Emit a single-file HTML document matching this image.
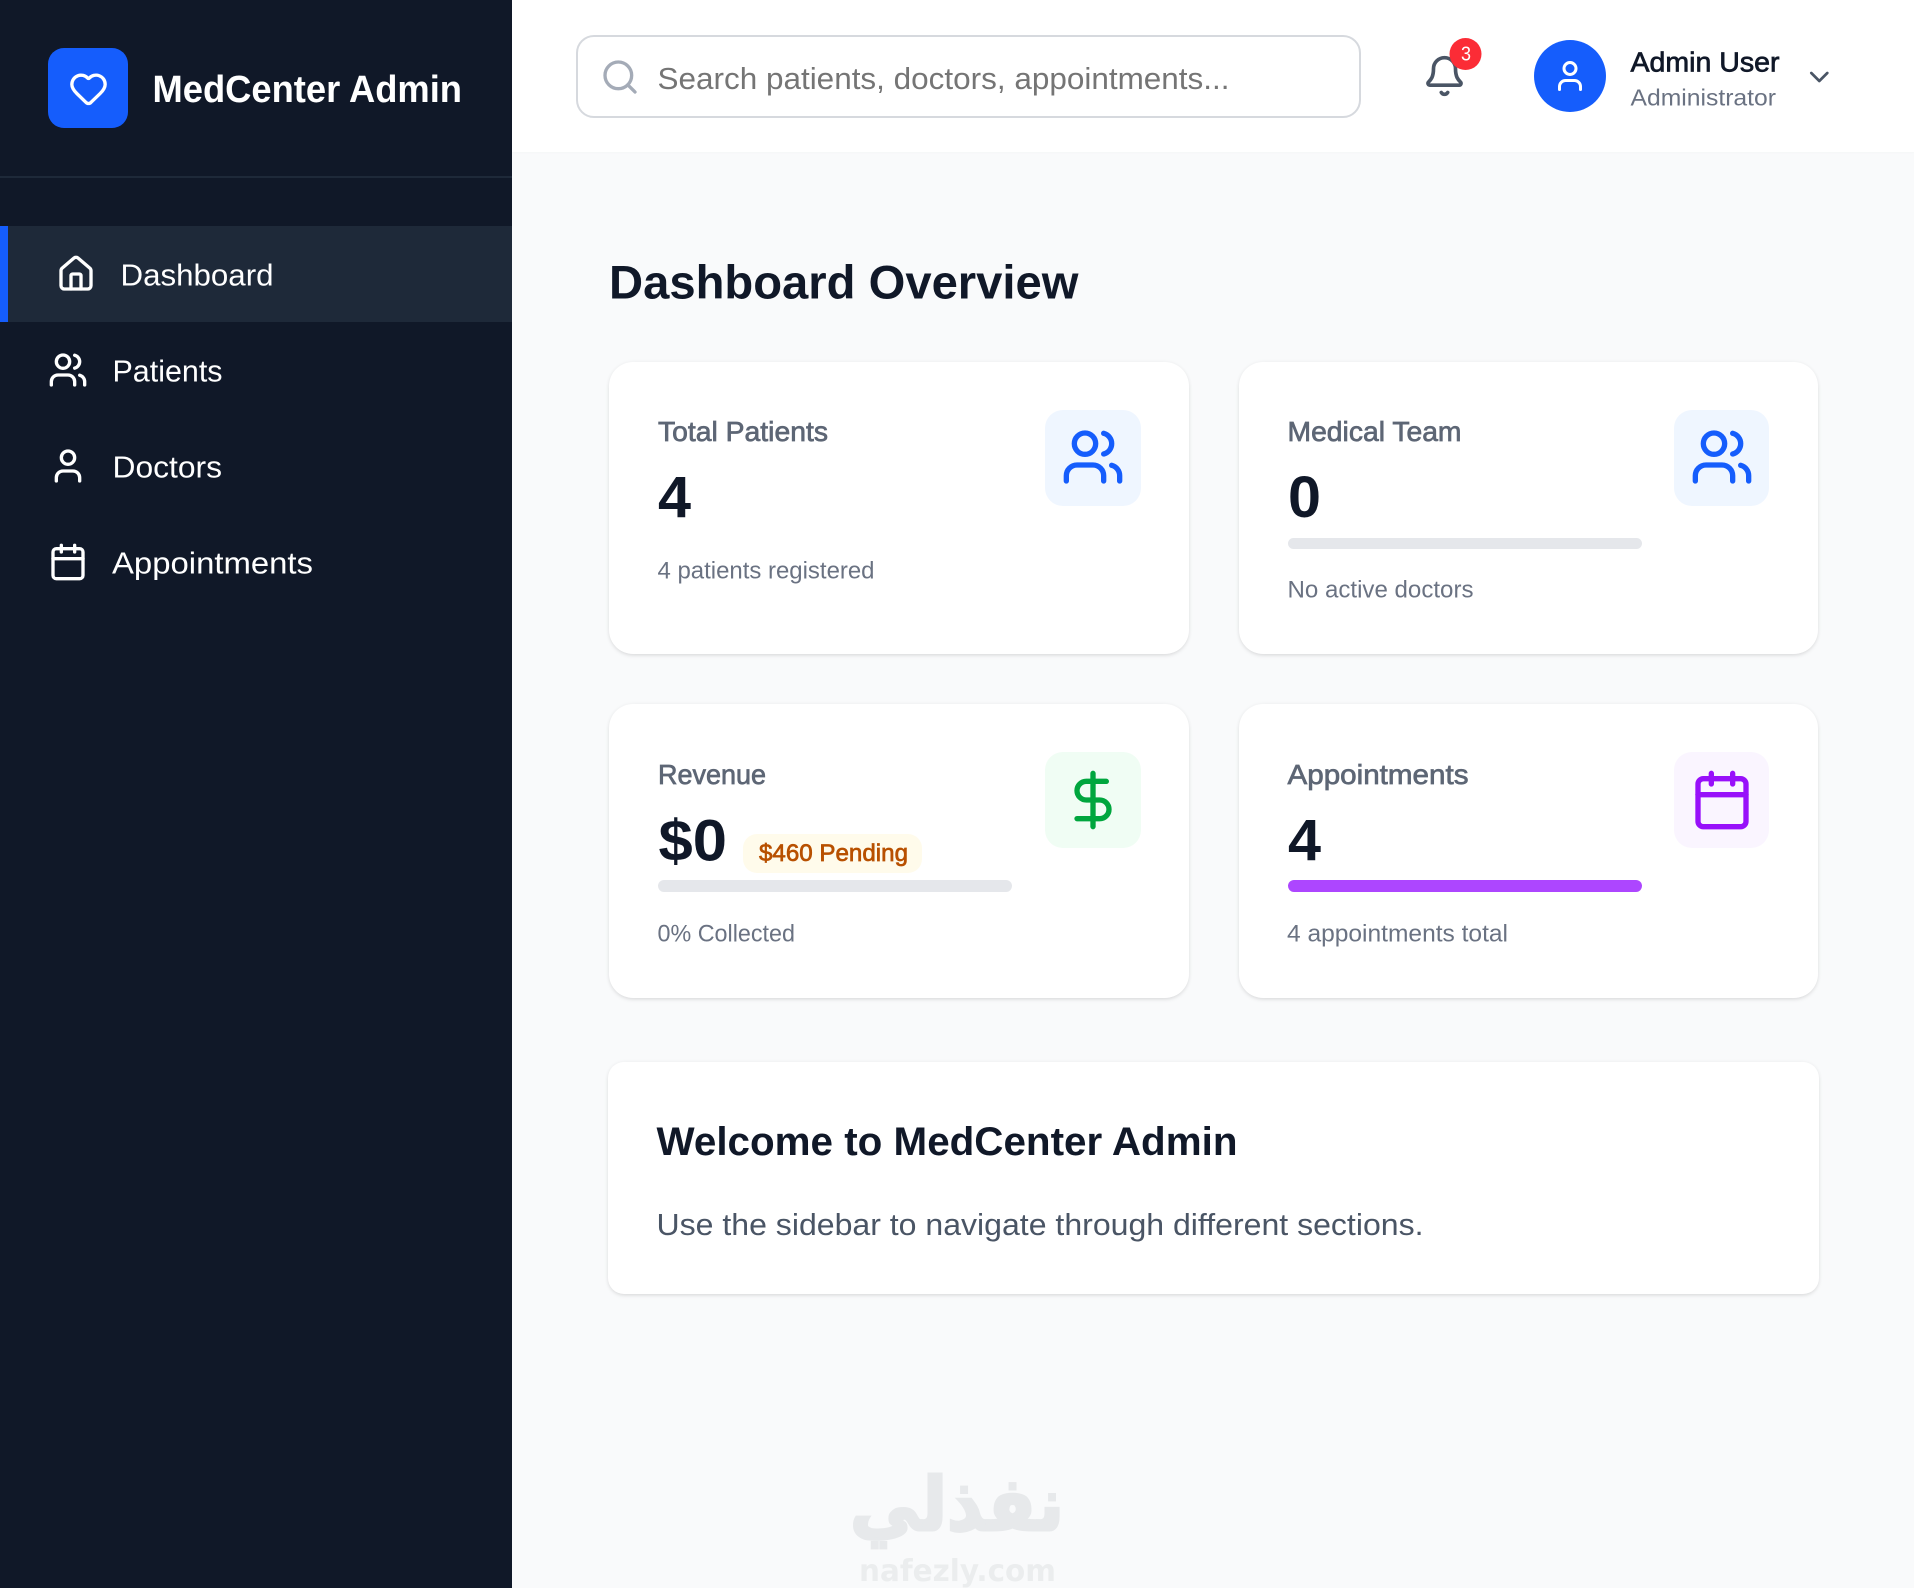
<!DOCTYPE html>
<html lang="en">
<head>
<meta charset="utf-8">
<title>MedCenter Admin</title>
<style>
html,body{margin:0;padding:0;width:1914px;height:1588px;overflow:hidden;background:#f9fafb;font-family:"Liberation Sans",sans-serif}
.abs{position:absolute;box-sizing:border-box}
#side{left:0;top:0;width:512px;height:1588px;background:#101828}
#side .rule{position:absolute;left:0;top:176px;width:512px;height:2px;background:#1e2939}
#side .active{position:absolute;box-sizing:border-box;left:0;top:226px;width:512px;height:96px;background:#1e2939;border-left:8px solid #155dfc}
#side .logo{position:absolute;left:48px;top:48px;width:80px;height:80px;border-radius:16px;background:#155dfc}
#head{left:512px;top:0;width:1402px;height:152px;background:#fff;box-shadow:0 1px 2px rgba(0,0,0,.02)}
#search{left:576px;top:35px;width:785px;height:83px;border:2px solid #d6d9de;border-radius:18px;background:#fff}
#avatar{left:1534px;top:40px;width:72px;height:72px;border-radius:50%;background:#155dfc}
.card{background:#fff;border-radius:24px;box-shadow:0 2px 5px -1px rgba(0,0,0,.13),0 0 4px rgba(0,0,0,.045)}
.tile{border-radius:18px}
.bar{height:12px;border-radius:6px;background:#e5e7eb}
#layer{position:absolute;left:0;top:0;width:1914px;height:1588px}
#layer text{font-family:"Liberation Sans",sans-serif;white-space:pre}
.b{font-weight:700}
.m{stroke-width:.7px;paint-order:stroke}
.ic{fill:none;stroke-linecap:round;stroke-linejoin:round;stroke-width:2}
</style>
</head>
<body>
<aside id="side" class="abs">
  <div class="logo"></div>
  <div class="rule"></div>
  <div class="active"></div>
</aside>
<header id="head" class="abs"></header>
<div id="search" class="abs"></div>
<div id="avatar" class="abs"></div>

<div class="abs card" style="left:608.5px;top:362px;width:580.5px;height:292px"></div>
<div class="abs card" style="left:1239px;top:362px;width:579px;height:292px"></div>
<div class="abs card" style="left:608.5px;top:704px;width:580.5px;height:294px"></div>
<div class="abs card" style="left:1239px;top:704px;width:579px;height:294px"></div>
<div class="abs card" style="left:608px;top:1062px;width:1211px;height:232px;border-radius:16px"></div>

<div class="abs tile" style="left:1045px;top:410px;width:96px;height:96px;background:#eff6ff"></div>
<div class="abs tile" style="left:1674px;top:410px;width:95px;height:96px;background:#eff6ff"></div>
<div class="abs tile" style="left:1045px;top:752px;width:96px;height:96px;background:#f0fdf4"></div>
<div class="abs tile" style="left:1674px;top:752px;width:95px;height:96px;background:#faf5ff"></div>

<div class="abs bar" style="left:1288px;top:538px;width:354px;height:11px"></div>
<div class="abs bar" style="left:658px;top:880px;width:354px"></div>
<div class="abs bar" style="left:1288px;top:880px;width:354px;background:#ad46ff"></div>
<div class="abs" style="left:743px;top:834px;width:179px;height:39px;border-radius:14px;background:#fffbeb"></div>

<svg id="layer" viewBox="0 0 1914 1588" xmlns="http://www.w3.org/2000/svg">
  <!-- logo heart -->
  <svg x="68.5" y="68.5" width="40" height="40" viewBox="0 0 24 24" class="ic" stroke="#fff"><path d="M2 9.5a5.5 5.5 0 0 1 9.591-3.676.56.56 0 0 0 .818 0A5.49 5.49 0 0 1 22 9.5c0 2.29-1.5 4-3 5.5l-5.492 5.313a2 2 0 0 1-3 .019L5 15c-1.5-1.5-3-3.2-3-5.5"/></svg>
  <text x="152.5" y="102" font-size="38" class="b" fill="#fff" textLength="309.5" lengthAdjust="spacingAndGlyphs">MedCenter Admin</text>

  <!-- nav icons -->
  <svg x="56" y="254" width="40" height="40" viewBox="0 0 24 24" class="ic" stroke="#fff"><path d="M15 21v-8a1 1 0 0 0-1-1h-4a1 1 0 0 0-1 1v8"/><path d="M3 10a2 2 0 0 1 .709-1.528l7-5.999a2 2 0 0 1 2.582 0l7 5.999A2 2 0 0 1 21 10v9a2 2 0 0 1-2 2H5a2 2 0 0 1-2-2z"/></svg>
  <svg x="48" y="350" width="40" height="40" viewBox="0 0 24 24" class="ic" stroke="#fff"><path d="M16 21v-2a4 4 0 0 0-4-4H6a4 4 0 0 0-4 4v2"/><circle cx="9" cy="7" r="4"/><path d="M22 21v-2a4 4 0 0 0-3-3.87"/><path d="M16 3.13a4 4 0 0 1 0 7.75"/></svg>
  <svg x="48" y="446" width="40" height="40" viewBox="0 0 24 24" class="ic" stroke="#fff"><path d="M19 21v-2a4 4 0 0 0-4-4H9a4 4 0 0 0-4 4v2"/><circle cx="12" cy="7" r="4"/></svg>
  <svg x="48" y="542" width="40" height="40" viewBox="0 0 24 24" class="ic" stroke="#fff"><path d="M8 2v4"/><path d="M16 2v4"/><rect x="3" y="4" width="18" height="18" rx="2"/><path d="M3 10h18"/></svg>

  <text x="120.5" y="285.5" font-size="31" fill="#fff" textLength="153" lengthAdjust="spacingAndGlyphs">Dashboard</text>
  <text x="112.5" y="381.5" font-size="31" fill="#fff" textLength="110" lengthAdjust="spacingAndGlyphs">Patients</text>
  <text x="112.5" y="477.5" font-size="31" fill="#fff" textLength="109.5" lengthAdjust="spacingAndGlyphs">Doctors</text>
  <text x="112" y="573.5" font-size="31" fill="#fff" textLength="201" lengthAdjust="spacingAndGlyphs">Appointments</text>

  <!-- header -->
  <svg x="600" y="57" width="40" height="40" viewBox="0 0 24 24" class="ic" stroke="#a4abb7"><path d="m21 21-4.34-4.34"/><circle cx="11" cy="11" r="8"/></svg>
  <text x="657.5" y="89" font-size="31" fill="#757575" textLength="572" lengthAdjust="spacingAndGlyphs">Search patients, doctors, appointments...</text>

  <svg x="1422.5" y="54" width="44" height="44" viewBox="0 0 24 24" class="ic" stroke="#4a5565"><path d="M10.268 21a2 2 0 0 0 3.464 0"/><path d="M3.262 15.326A1 1 0 0 0 4 17h16a1 1 0 0 0 .74-1.673C19.41 13.956 18 12.499 18 8A6 6 0 0 0 6 8c0 4.499-1.411 5.956-2.738 7.326"/></svg>
  <circle cx="1465.5" cy="54" r="16" fill="#fb2c36"/>
  <text x="1461" y="60.5" font-size="20" fill="#fff" textLength="10" lengthAdjust="spacingAndGlyphs">3</text>

  <svg x="1552" y="58" width="36" height="36" viewBox="0 0 24 24" class="ic" stroke="#fff"><path d="M19 21v-2a4 4 0 0 0-4-4H9a4 4 0 0 0-4 4v2"/><circle cx="12" cy="7" r="4"/></svg>
  <text x="1630.5" y="71.5" font-size="27.5" class="m" fill="#101828" stroke="#101828" textLength="149" lengthAdjust="spacingAndGlyphs">Admin User</text>
  <text x="1630.5" y="105.5" font-size="23.5" fill="#6a7282" textLength="145.5" lengthAdjust="spacingAndGlyphs">Administrator</text>
  <svg x="1803.3" y="61" width="32" height="32" viewBox="0 0 24 24" class="ic" stroke="#4a5565"><path d="m6 9 6 6 6-6"/></svg>

  <!-- title -->
  <text x="609" y="298.5" font-size="47" class="b" fill="#101828" textLength="469.5" lengthAdjust="spacingAndGlyphs">Dashboard Overview</text>

  <!-- card 1 -->
  <text x="658" y="441" font-size="27.5" class="m" fill="#5d6675" stroke="#5d6675" textLength="170" lengthAdjust="spacingAndGlyphs">Total Patients</text>
  <text x="658" y="517" font-size="58" class="b" fill="#101828" textLength="33" lengthAdjust="spacingAndGlyphs">4</text>
  <text x="657.5" y="578.5" font-size="24" fill="#6a7282" textLength="217" lengthAdjust="spacingAndGlyphs">4 patients registered</text>
  <svg x="1061" y="425" width="64" height="64" viewBox="0 0 24 24" class="ic" stroke="#155dfc"><path d="M16 21v-2a4 4 0 0 0-4-4H6a4 4 0 0 0-4 4v2"/><circle cx="9" cy="7" r="4"/><path d="M22 21v-2a4 4 0 0 0-3-3.87"/><path d="M16 3.13a4 4 0 0 1 0 7.75"/></svg>

  <!-- card 2 -->
  <text x="1287.5" y="441" font-size="27.5" class="m" fill="#5d6675" stroke="#5d6675" textLength="174" lengthAdjust="spacingAndGlyphs">Medical Team</text>
  <text x="1288" y="517" font-size="58" class="b" fill="#101828" textLength="33" lengthAdjust="spacingAndGlyphs">0</text>
  <text x="1287.5" y="597.5" font-size="24" fill="#6a7282" textLength="186" lengthAdjust="spacingAndGlyphs">No active doctors</text>
  <svg x="1690" y="425" width="64" height="64" viewBox="0 0 24 24" class="ic" stroke="#155dfc"><path d="M16 21v-2a4 4 0 0 0-4-4H6a4 4 0 0 0-4 4v2"/><circle cx="9" cy="7" r="4"/><path d="M22 21v-2a4 4 0 0 0-3-3.87"/><path d="M16 3.13a4 4 0 0 1 0 7.75"/></svg>

  <!-- card 3 -->
  <text x="658" y="784" font-size="27.5" class="m" fill="#5d6675" stroke="#5d6675" textLength="108" lengthAdjust="spacingAndGlyphs">Revenue</text>
  <text x="658.5" y="860.5" font-size="58" class="b" fill="#101828" textLength="68.5" lengthAdjust="spacingAndGlyphs">$0</text>
  <text x="759" y="861" font-size="24.5" class="m" fill="#b85000" stroke="#b85000" textLength="149" lengthAdjust="spacingAndGlyphs">$460 Pending</text>
  <text x="657.5" y="941.5" font-size="24" fill="#6a7282" textLength="137.5" lengthAdjust="spacingAndGlyphs">0% Collected</text>
  <svg x="1061" y="768" width="64" height="64" viewBox="0 0 24 24" class="ic" stroke="#00a63e"><line x1="12" y1="2" x2="12" y2="22"/><path d="M17 5H9.5a3.5 3.5 0 0 0 0 7h5a3.5 3.5 0 0 1 0 7H6"/></svg>

  <!-- card 4 -->
  <text x="1287.5" y="784" font-size="27.5" class="m" fill="#5d6675" stroke="#5d6675" textLength="181" lengthAdjust="spacingAndGlyphs">Appointments</text>
  <text x="1288" y="860" font-size="58" class="b" fill="#101828" textLength="33" lengthAdjust="spacingAndGlyphs">4</text>
  <text x="1287" y="941.5" font-size="24" fill="#6a7282" textLength="221" lengthAdjust="spacingAndGlyphs">4 appointments total</text>
  <svg x="1690" y="768" width="64" height="64" viewBox="0 0 24 24" class="ic" stroke="#9810fa"><path d="M8 2v4"/><path d="M16 2v4"/><rect x="3" y="4" width="18" height="18" rx="2"/><path d="M3 10h18"/></svg>

  <!-- welcome -->
  <text x="656.5" y="1155" font-size="40" class="b" fill="#101828" textLength="581" lengthAdjust="spacingAndGlyphs">Welcome to MedCenter Admin</text>
  <text x="656.5" y="1235" font-size="31" fill="#4a5565" textLength="767" lengthAdjust="spacingAndGlyphs">Use the sidebar to navigate through different sections.</text>

  <!-- watermark -->
  <text x="850" y="1530" font-size="74" font-weight="700" fill="#e7e9eb" stroke="#e7e9eb" stroke-width="3" style="font-family:'DejaVu Sans',sans-serif" textLength="214" lengthAdjust="spacingAndGlyphs">نفذلي</text>
  <text x="859" y="1581" font-size="30" font-weight="700" fill="#ebedee" style="font-family:'DejaVu Sans',sans-serif" textLength="197" lengthAdjust="spacingAndGlyphs">nafezly.com</text>
</svg>
</body>
</html>
